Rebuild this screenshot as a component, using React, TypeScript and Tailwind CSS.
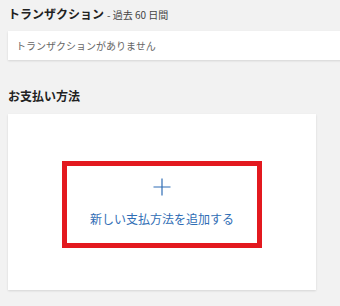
import React from "react";

export default function App() {
  return (
    <div
      className="w-[340px] h-[306px] bg-[#f2f2f2] overflow-hidden pl-[8px]"
      style={{ fontFamily: '"Noto Sans CJK JP", "Noto Sans", sans-serif' }}
    >
      <div className="flex items-baseline pt-[5px] h-[31px]">
        <span className="text-[12px] font-bold text-[#222] leading-[18px]">トランザクション</span>
        <span className="text-[10px] text-[#444] ml-[3px] leading-[18px]">- 過去 60 日間</span>
      </div>
      <div className="h-[29px] w-[340px] bg-white shadow-[0_1px_2px_rgba(0,0,0,0.12)] flex items-center pl-[8px]">
        <span className="text-[10px] text-[#666]">トランザクションがありません</span>
      </div>
      <div className="mt-[24px] h-[24px] flex items-center">
        <span className="text-[12px] font-bold text-[#222]">お支払い方法</span>
      </div>
      <div className="mt-[6px] w-[308px] h-[176px] bg-white shadow-[0_1px_2px_rgba(0,0,0,0.12)] flex flex-col items-center pt-[47px]">
        <div className="w-[200px] h-[87px] border-[5px] border-[#e3191f] flex flex-col items-center pt-[12px]">
          <svg width="18" height="18" viewBox="0 0 18 18">
            <path d="M9 0.5V17.5M0.5 9H17.5" stroke="#2f6db5" strokeWidth="1.2" />
          </svg>
          <span className="mt-[14px] text-[12px] leading-[18px] text-[#2f6db5]">新しい支払方法を追加する</span>
        </div>
      </div>
    </div>
  );
}
